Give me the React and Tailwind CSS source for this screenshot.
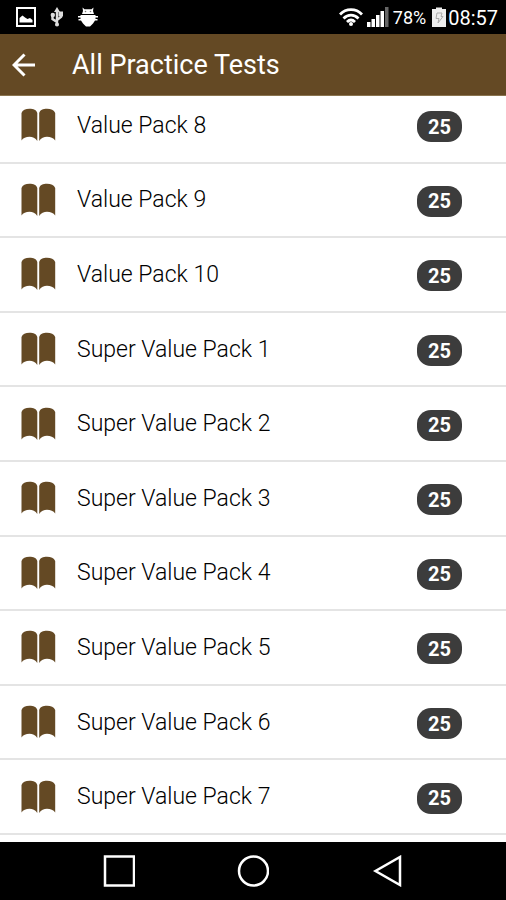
import React from "react";

const tests = [
  { name: "Value Pack 8", count: 25 },
  { name: "Value Pack 9", count: 25 },
  { name: "Value Pack 10", count: 25 },
  { name: "Super Value Pack 1", count: 25 },
  { name: "Super Value Pack 2", count: 25 },
  { name: "Super Value Pack 3", count: 25 },
  { name: "Super Value Pack 4", count: 25 },
  { name: "Super Value Pack 5", count: 25 },
  { name: "Super Value Pack 6", count: 25 },
  { name: "Super Value Pack 7", count: 25 },
];

function BookIcon() {
  return (
    <svg width="36" height="34" viewBox="0 0 36 34" fill="#644924" aria-hidden="true">
      <path d="M1.500 5C2.500 2 5.500 0.800 9.500 0.800C13.500 0.800 16.500 2 17.300 5V33C15.500 29.800 12.500 28.800 9.500 28.800C6 28.800 3 30 1.500 32.500Z" />
      <path d="M19.200 5C20 2 23 0.800 27 0.800C31 0.800 34 2 35.200 5V32.500C33.500 30 30.500 28.800 27 28.800C24 28.800 21 29.800 19.200 33Z" />
    </svg>
  );
}

function StatusBar() {
  return (
    <div className="h-[34px] shrink-0 bg-black text-white flex items-center justify-between pl-4 pr-2">
      <div className="flex items-center gap-3">
        <svg width="20" height="20" viewBox="0 0 20 20" aria-hidden="true">
          <rect x="1" y="1" width="18" height="18" fill="none" stroke="#fff" strokeWidth="2" />
          <path d="M3.500 15.500V11L6.500 8.500L9 10.500L11.500 12L14 11L16.500 13V15.500Z" fill="#fff" />
        </svg>
        <svg width="18" height="20" viewBox="0 0 18 20" fill="none" stroke="#ddd" strokeWidth="2.400" aria-hidden="true">
          <path d="M9 19V3M9 15L4.500 12V8M9 13L13 10V6" />
          <path d="M9 0L12 5H6Z" fill="#ddd" stroke="none" />
          <circle cx="4.800" cy="8" r="2.200" fill="#ddd" stroke="none" />
          <rect x="10.500" y="4.500" width="4.500" height="5" fill="#ddd" stroke="none" />
          <circle cx="9" cy="17.500" r="2" fill="#ddd" stroke="none" />
        </svg>
        <svg width="20" height="20" viewBox="0 0 20 20" fill="#fff" aria-hidden="true">
          <path d="M4.500 0.500L6.500 2.200H13.500L15.500 0.500L15 4L16 7H4L5 4Z" />
          <path d="M2.500 8H17.500V9H20V10.400H17.500V12H19.500V13.400H17L15 16.500L12 19.500H8L5 16.500L3 13.400H0.500V12H2.500V10.400H0V9H2.500Z" />
          <circle cx="7.500" cy="4.500" r="0.800" fill="#777" />
          <circle cx="12.500" cy="4.500" r="0.800" fill="#777" />
        </svg>
      </div>
      <div className="flex items-center">
        <svg className="mr-1" width="24" height="18" viewBox="0 0 24 18" fill="none" stroke="#fff" strokeWidth="2.800" aria-hidden="true">
          <path d="M1 6.500C7 0 17 0 23 6.500" />
          <path d="M4.500 10.400C9 6 15 6 19.500 10.400" />
          <path d="M8 14C10.500 11.500 13.500 11.500 16 14" />
          <circle cx="12" cy="16" r="2" fill="#fff" stroke="none" />
        </svg>
        <svg className="mr-1" width="22" height="20" viewBox="0 0 22 20" fill="#fff" aria-hidden="true">
          <rect x="0" y="15" width="3.500" height="5" />
          <rect x="4.500" y="12" width="3.500" height="8" />
          <rect x="9" y="8" width="3.500" height="12" />
          <rect x="13.500" y="4" width="3.500" height="16" />
          <rect x="18" y="0" width="3.500" height="20" fill="#666" />
        </svg>
        <span className="text-lg pt-0.5">78%</span>
        <svg className="ml-1.5 mr-0.5" width="14" height="20" viewBox="0 0 14 20" aria-hidden="true">
          <path d="M0 2H4V0.500H10V2H14V20H0Z" fill="#eee" />
          <path d="M5 6H10L9 9.500H11L6 16L7 11.500H4Z" fill="none" stroke="#aaa" />
        </svg>
        <span className="text-xl pt-0.5">08:57</span>
      </div>
    </div>
  );
}

export default function App() {
  return (
    <div className="h-screen flex flex-col bg-white font-[Roboto,sans-serif]">
      <StatusBar />

      {/* Header */}
      <header className="h-[62px] shrink-0 bg-[#644924] border-b border-[#8a744f] text-white flex items-center gap-9 pl-3">
        <button aria-label="Back">
          <svg width="24" height="24" viewBox="0 0 24 24" fill="none" stroke="#fff" strokeWidth="3" aria-hidden="true">
            <path d="M23 12H2M12.500 1.500L2 12L12.500 22.500" />
          </svg>
        </button>
        <h1 className="text-[27px] leading-8">All Practice Tests</h1>
      </header>

      {/* Test list, scrolled slightly past the top of the first row */}
      <main className="flex-1 min-h-0 overflow-hidden flex flex-col">
        <ul className="flex-1 flex flex-col -mt-[7px] mb-[7px]">
          {tests.map((test) => (
            <li key={test.name} className="flex-1 border-b-2 border-[#e4e4e4]">
              <button className="w-full h-full flex items-center pl-5 pr-11 text-left">
                <BookIcon />
                <span className="flex-1 pl-[21px] pt-px text-[23px] leading-8 font-light text-black">{test.name}</span>
                <span className="mt-[3px] w-[45px] h-[31px] rounded-[14px] bg-[#3c3c3c] text-white text-xl font-bold flex items-center justify-center">
                  {test.count}
                </span>
              </button>
            </li>
          ))}
        </ul>
      </main>

      {/* System navigation */}
      <nav className="h-[58px] shrink-0 bg-black flex items-center justify-center gap-[102px]">
        <button aria-label="Recent apps">
          <svg width="32" height="32" viewBox="0 0 32 32" fill="none" stroke="#fff" strokeWidth="2.500" aria-hidden="true">
            <rect x="2" y="1.500" width="29" height="29" />
          </svg>
        </button>
        <button aria-label="Home">
          <svg width="32" height="32" viewBox="0 0 32 32" fill="none" stroke="#fff" strokeWidth="2.500" aria-hidden="true">
            <circle cx="16.500" cy="16" r="14.500" />
          </svg>
        </button>
        <button aria-label="Go back">
          <svg width="32" height="32" viewBox="0 0 32 32" fill="none" stroke="#fff" strokeWidth="2.500" aria-hidden="true">
            <path d="M29 2V30L4.500 16Z" />
          </svg>
        </button>
      </nav>
    </div>
  );
}
